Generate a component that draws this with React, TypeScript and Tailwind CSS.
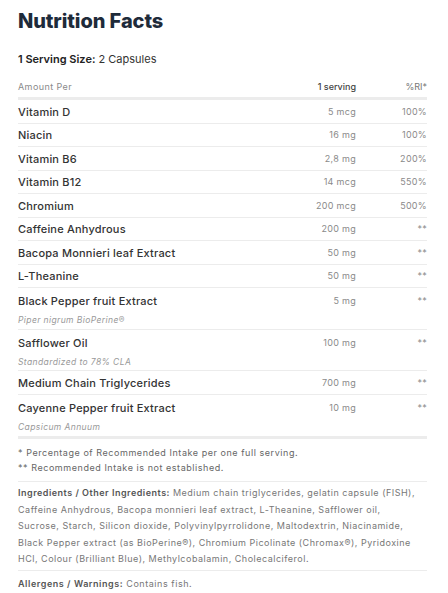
const rows = [
  { name: "Vitamin D", amount: "5 mcg", ri: "100%" },
  { name: "Niacin", amount: "16 mg", ri: "100%" },
  { name: "Vitamin B6", amount: "2,8 mg", ri: "200%" },
  { name: "Vitamin B12", amount: "14 mcg", ri: "550%" },
  { name: "Chromium", amount: "200 mcg", ri: "500%" },
  { name: "Caffeine Anhydrous", amount: "200 mg", ri: "**" },
  { name: "Bacopa Monnieri leaf Extract", amount: "50 mg", ri: "**" },
  { name: "L-Theanine", amount: "50 mg", ri: "**" },
  { name: "Black Pepper fruit Extract", amount: "5 mg", ri: "**", sub: "Piper nigrum BioPerine®" },
  { name: "Safflower Oil", amount: "100 mg", ri: "**", sub: "Standardized to 78% CLA" },
  { name: "Medium Chain Triglycerides", amount: "700 mg", ri: "**" },
  { name: "Cayenne Pepper fruit Extract", amount: "10 mg", ri: "**", sub: "Capsicum Annuum" },
];

export default function App() {
  return (
    <div className="w-[448px] h-[593px] bg-white px-[18px] pr-[21px] font-['Inter','Liberation_Sans',sans-serif]">
      {/* Title */}
      <h1 className="pt-[7px] text-[20px] leading-[28px] font-extrabold text-[#1e2b3a] tracking-[-0.1px]">
        Nutrition Facts
      </h1>

      <p className="mt-[16px] text-[11px] leading-[16px] text-[#333]">
        <span className="font-semibold text-[#222]">1 Serving Size:</span> 2 Capsules
      </p>

      {/* Table */}
      <div className="mt-[13px]">
        <div className="grid grid-cols-[1fr_90px_71px] items-center pb-[3px] border-b-[3px] border-[#ececec] text-[9px] leading-[14px]">
          <span className="text-[#8a8a8a] tracking-[0.4px]">Amount Per</span>
          <span className="text-right text-[#444] font-medium">1 serving</span>
          <span className="text-right text-[#777]">%RI*</span>
        </div>

        {rows.map((r, i) => (
          <div
            key={r.name}
            className={`grid grid-cols-[1fr_90px_71px] ${i < rows.length - 1 ? "border-b border-[#ececec]" : ""} ${r.sub ? "h-[41.5px] content-start pt-[5px]" : "h-[23.5px] items-center pt-[1px]"}`}
          >
            <div>
              <div className="text-[11px] leading-[16px] font-medium text-[#333] tracking-[0.2px]">{r.name}</div>
              {r.sub && (
                <div className="mt-[5px] text-[8.5px] leading-[12px] italic text-[#999] tracking-[0.4px]">{r.sub}</div>
              )}
            </div>
            <div className="text-right text-[9px] leading-[16px] text-[#8a8a8a] tracking-[0.3px]">{r.amount}</div>
            <div className="text-right text-[9px] leading-[16px] text-[#8a8a8a] tracking-[0.3px]">{r.ri}</div>
          </div>
        ))}
      </div>

      {/* Footnotes */}
      <div className="border-t-[3px] border-[#ececec] pt-[6px] pb-[6px] text-[9px] leading-[15px] text-[#666] tracking-[0.55px]">
        <p>* Percentage of Recommended Intake per one full serving.</p>
        <p>** Recommended Intake is not established.</p>
      </div>

      <div className="border-t border-[#ececec] pt-[3px] pb-[2px] text-[9px] leading-[16.5px] text-[#777] tracking-[0.5px]">
        <p>
          <b className="font-semibold text-[#555]">Ingredients / Other Ingredients:</b> Medium chain triglycerides,
          gelatin capsule (FISH),
          <br />
          Caffeine Anhydrous, Bacopa monnieri leaf extract, L-Theanine, Safflower oil,
          <br />
          Sucrose, Starch, Silicon dioxide, Polyvinylpyrrolidone, Maltodextrin, Niacinamide,
          <br />
          Black Pepper extract (as BioPerine®), Chromium Picolinate (Chromax®), Pyridoxine
          <br />
          HCl, Colour (Brilliant Blue), Methylcobalamin, Cholecalciferol.
        </p>
      </div>

      <div className="border-t border-[#ececec] pt-[5px] text-[9px] leading-[16px] text-[#777] tracking-[0.55px]">
        <b className="font-semibold text-[#555]">Allergens / Warnings:</b> Contains fish.
      </div>
    </div>
  );
}
